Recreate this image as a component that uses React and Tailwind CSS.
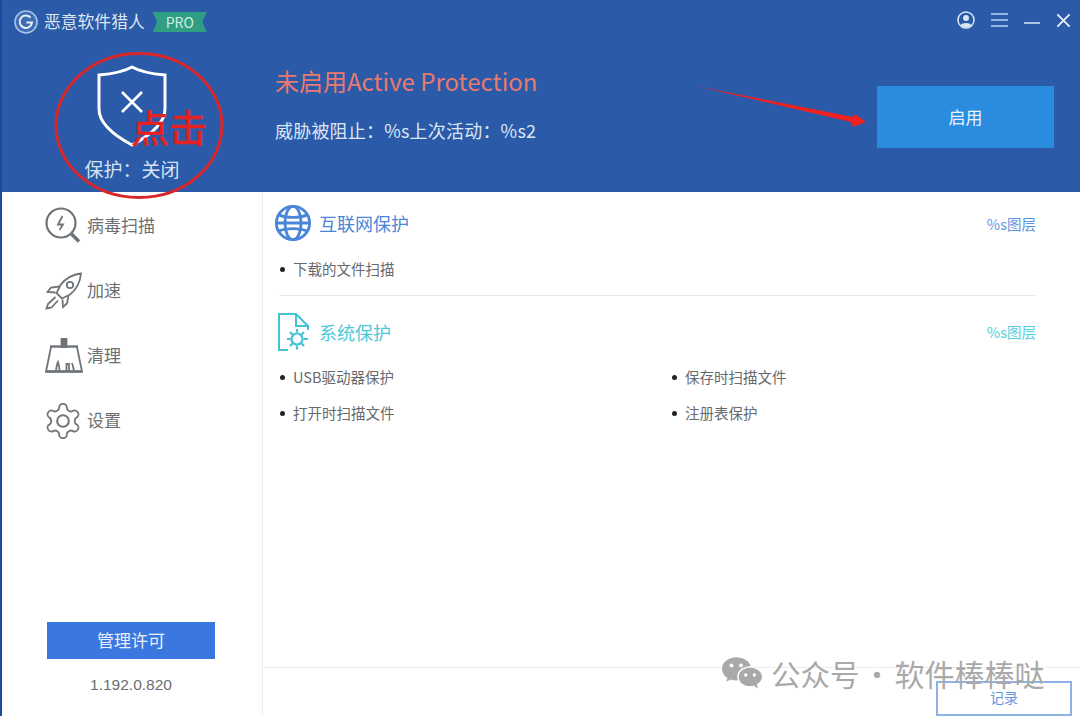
import React from "react";

const font = { fontFamily: '"Noto Sans CJK SC", "Liberation Sans", sans-serif' };

function Logo() {
  return (
    <svg width="24" height="24" viewBox="0 0 24 24" fill="none">
      <circle cx="12" cy="12" r="11" fill="#3f6db5" stroke="#a9c4e8" strokeWidth="1.6" />
      <path d="M16.5 7.6A6.2 6.2 0 1 0 18 12.6h-5.6" stroke="#e4edf8" strokeWidth="2" />
    </svg>
  );
}

function Shield() {
  return (
    <svg width="70" height="82" viewBox="0 0 70 82" fill="none" stroke="#ffffff">
      <path d="M35 2 C28 6 14 9 2 10 V44 C2 60 20 72 35 80 C50 72 68 60 68 44 V10 C56 9 42 6 35 2 Z" strokeWidth="3" />
      <path d="M25 27 L45 47 M45 27 L25 47" strokeWidth="2.6" />
    </svg>
  );
}

function ScanIcon() {
  return (
    <svg width="36" height="38" viewBox="0 0 36 38" fill="none" stroke="#6f7478" strokeWidth="2.2">
      <circle cx="16" cy="16" r="14.5" />
      <path d="M26.5 27 L34 34.5" strokeWidth="3.6" />
      <path d="M17.5 9 L13 17.5 H18 L14.5 23" strokeWidth="1.8" />
    </svg>
  );
}

function RocketIcon() {
  return (
    <svg width="38" height="38" viewBox="0 0 38 38" fill="none" stroke="#6f7478" strokeWidth="1.8">
      <path d="M36 1.5 C27 2.5 20 7 15.5 13 L11.5 21 L17 26.5 L25 22.5 C31 18 35 11 36 1.5 Z" />
      <circle cx="25" cy="13" r="3.2" />
      <path d="M14.5 14.5 L6 15.5 L2.5 20 L10.5 20.5 M23.5 23.5 L22 31.5 L18 35 L17.5 27.5" />
      <path d="M10.5 25 L3 32 L1.5 36.5 L6.5 35.5 L13 28.5" />
    </svg>
  );
}

function BroomIcon() {
  return (
    <svg width="38" height="36" viewBox="0 0 38 36" fill="none" stroke="#6f7478" strokeWidth="1.8">
      <path d="M16.5 1 H21.5 V9 H16.5 Z" fill="#6f7478" />
      <path d="M5 8.5 H33" strokeWidth="2.4" />
      <path d="M6 9 L1 33.5 H37 L32 9" />
      <path d="M0.5 33.5 H37.5" strokeWidth="2.4" />
      <path d="M11 33 C11.5 28 12 26 13 24 C14 27 14.5 30 14.5 33 M21.5 33 V26 H24 V33 M29 33 C28.5 30 28 28 27 25" />
    </svg>
  );
}

function GearIcon() {
  return (
    <svg width="36" height="36" viewBox="1.5 1.5 21 21" fill="none" stroke="#6f7478" strokeWidth="1.05" strokeLinejoin="round">
      <path d="M12.22 2h-.44a2 2 0 0 0-2 2v.18a2 2 0 0 1-1 1.73l-.43.25a2 2 0 0 1-2 0l-.15-.08a2 2 0 0 0-2.73.73l-.22.38a2 2 0 0 0 .73 2.73l.15.1a2 2 0 0 1 1 1.72v.51a2 2 0 0 1-1 1.74l-.15.09a2 2 0 0 0-.73 2.73l.22.38a2 2 0 0 0 2.73.73l.15-.08a2 2 0 0 1 2 0l.43.25a2 2 0 0 1 1 1.73V20a2 2 0 0 0 2 2h.44a2 2 0 0 0 2-2v-.18a2 2 0 0 1 1-1.73l.43-.25a2 2 0 0 1 2 0l.15.08a2 2 0 0 0 2.73-.73l.22-.39a2 2 0 0 0-.73-2.73l-.15-.08a2 2 0 0 1-1-1.74v-.5a2 2 0 0 1 1-1.74l.15-.09a2 2 0 0 0 .73-2.73l-.22-.38a2 2 0 0 0-2.73-.73l-.15.08a2 2 0 0 1-2 0l-.43-.25a2 2 0 0 1-1-1.73V4a2 2 0 0 0-2-2z" />
      <circle cx="12" cy="12" r="3.4" strokeWidth="1.2" />
    </svg>
  );
}

function GlobeIcon() {
  return (
    <svg width="38" height="38" viewBox="0 0 40 40" fill="none" stroke="#4a86d8" strokeWidth="3">
      <circle cx="20" cy="20" r="17.5" />
      <ellipse cx="20" cy="20" rx="8.5" ry="17.5" />
      <path d="M5 11.5 C13 15 27 15 35 11.5 M5 28.5 C13 25 27 25 35 28.5 M2.5 20 H37.5" />
    </svg>
  );
}

function SystemIcon() {
  return (
    <svg width="34" height="40" viewBox="0 0 34 40" fill="none" stroke="#43c3d6" strokeWidth="2">
      <path d="M11 38 H2 V2 H19 L31 14 V18 M19 2 V14 H31" />
      <circle cx="20" cy="27" r="5.5" strokeWidth="2.2" />
      <path d="M20 17 V20.5 M20 33.5 V37.5 M10 27 H13.5 M26.5 27 H31 M13 20 L15.5 22.5 M24.5 31.5 L27 34 M27 20 L24.5 22.5 M15.5 31.5 L13 34" strokeWidth="2.2" />
    </svg>
  );
}

function WeChat() {
  return (
    <svg width="40" height="33" viewBox="0 0 42 34" fill="#a9a9a9">
      <path d="M15 0 C6.7 0 0 5.4 0 12.2 C0 16 2.2 19.4 5.6 21.6 L4.4 25.6 L9 23.2 C10.9 23.9 12.9 24.3 15 24.3 C15.6 24.3 16.2 24.3 16.7 24.2 C16.2 22.9 16 21.6 16 20.2 C16 14 21.7 9.4 29 9.4 C29.4 9.4 29.7 9.4 30 9.4 C28.6 3.9 22.4 0 15 0 Z" />
      <path d="M29.5 11 C22.6 11 17.5 15.2 17.5 20.6 C17.5 26 22.6 30.2 29.5 30.2 C31 30.2 32.3 30 33.6 29.6 L37.5 33 L36.7 28.1 C39.8 26.3 42 23.6 42 20.6 C42 15.2 36.4 11 29.5 11 Z" />
      <circle cx="10" cy="8.5" r="2" fill="#ffffff" />
      <circle cx="20" cy="8.5" r="2" fill="#ffffff" />
      <circle cx="25" cy="18.5" r="1.8" fill="#ffffff" />
      <circle cx="34" cy="18.5" r="1.8" fill="#ffffff" />
    </svg>
  );
}

function NavItem({ icon, label }) {
  return (
    <div className="flex h-[65px] items-center">
      <div className="flex w-[42px] justify-start">{icon}</div>
      <span className="-mt-[2px] text-[17px] text-[#6b6f73]">{label}</span>
    </div>
  );
}

function Bullet({ children }) {
  return (
    <div className="flex h-[36px] items-center text-[14.5px] text-[#666a6e]">
      <span className="mr-[8px] h-[5px] w-[5px] rounded-full bg-[#222222]" />
      <span>{children}</span>
    </div>
  );
}

export default function App() {
  return (
    <div style={font} className="relative flex h-[716px] w-[1080px] flex-col overflow-hidden border-l-2 border-[#1d4a9c] bg-white">
      {/* Header */}
      <header className="flex h-[192px] shrink-0 flex-col bg-[#2b5aa8]">
        <div className="flex h-[44px] items-center pl-[12px] pr-[9px]">
          <Logo />
          <span className="ml-[6px] text-[16.8px] text-[#dbe6f5]">恶意软件猎人</span>
          <span className="ml-[8px] flex h-[20px] w-[54px] items-center justify-center bg-[#2f9e83] text-[14px] text-[#cfeee4] [clip-path:polygon(0_0,100%_0,92%_50%,100%_100%,0_100%,8%_50%)]">
            PRO
          </span>
          <div className="-mt-[4px] ml-auto flex items-center gap-[16px]">
            <svg width="18" height="18" viewBox="0 0 18 18" fill="none">
              <circle cx="9" cy="9" r="8" stroke="#dbe6f5" strokeWidth="1.5" />
              <circle cx="9" cy="7" r="3" fill="#dbe6f5" />
              <path d="M3.6 14.2 C5 11.4 13 11.4 14.4 14.2 C12 16.8 6 16.8 3.6 14.2 Z" fill="#dbe6f5" />
            </svg>
            <svg width="17" height="14" viewBox="0 0 17 14" stroke="#bcd0ea" strokeWidth="1.4">
              <path d="M0 1 H17 M0 7 H17 M0 13 H17" />
            </svg>
            <svg width="16" height="14" viewBox="0 0 16 14" stroke="#dbe6f5" strokeWidth="1.5">
              <path d="M0 10 H16" />
            </svg>
            <svg width="15" height="15" viewBox="0 0 16 16" stroke="#e8eff9" strokeWidth="2">
              <path d="M1.5 1.5 L14.5 14.5 M14.5 1.5 L1.5 14.5" />
            </svg>
          </div>
        </div>
        <div className="flex flex-1">
          <div className="flex w-[273px] flex-col items-center pr-[13px] pt-[21px]">
            <Shield />
            <span className="mt-[8px] text-[19px] leading-[28px] text-[#d6e2f3]">保护：关闭</span>
          </div>
          <div className="flex flex-col pt-[19px]">
            <h1 className="text-[24px] font-normal leading-[36px] text-[#e8796f]">未启用Active Protection</h1>
            <p className="mt-[18px] text-[18px] leading-[26px] tracking-[0.2px] text-[#dce7f6]">威胁被阻止：%s上次活动：%s2</p>
          </div>
          <button className="ml-auto mr-[26px] mt-[42px] h-[62px] w-[177px] bg-[#2a8cdf] text-[17px] text-[#e8f2fc]">启用</button>
        </div>
      </header>

      {/* Body */}
      <div className="flex min-h-0 flex-1">
        <aside className="flex w-[261px] shrink-0 flex-col border-r border-[#eeeeee] pl-[43px]">
          <nav className="flex flex-col pt-[1px]">
            <NavItem icon={<ScanIcon />} label="病毒扫描" />
            <NavItem icon={<RocketIcon />} label="加速" />
            <NavItem icon={<BroomIcon />} label="清理" />
            <NavItem icon={<GearIcon />} label="设置" />
          </nav>
          <button className="ml-[2px] mt-auto h-[37px] w-[168px] bg-[#3a78e0] pb-[2px] text-[17px] text-[#eaf1fc]">管理许可</button>
          <div className="mb-[21px] ml-[2px] mt-[16px] w-[168px] text-center text-[15.5px] leading-[20px] text-[#6b6f73]" style={{ fontFamily: '"Liberation Sans", sans-serif' }}>
            1.192.0.820
          </div>
        </aside>

        <main className="flex min-w-0 flex-1 flex-col">
          <div className="flex-1 pl-[11px] pr-[44px]">
            <section className="ml-[5px] h-[104px] border-b border-[#e9e9e9]">
              <div className="-ml-[5px] flex h-[62px] items-center">
                <GlobeIcon />
                <span className="ml-[7px] text-[18px] text-[#4a86d8]">互联网保护</span>
                <span className="ml-auto mt-[2px] text-[14.5px] text-[#5f95e0]">%s图层</span>
              </div>
              <div className="-mt-[3px] ml-[1px]">
                <Bullet>下载的文件扫描</Bullet>
              </div>
            </section>
            <section className="ml-[5px]">
              <div className="-ml-[2px] flex h-[63px] items-center pt-[9px]">
                <SystemIcon />
                <span className="ml-[8px] text-[18px] text-[#4cc8d8]">系统保护</span>
                <span className="ml-auto text-[14.5px] text-[#55cfdd]">%s图层</span>
              </div>
              <div className="ml-[1px] grid grid-cols-[392px_1fr]">
                <Bullet>USB驱动器保护</Bullet>
                <Bullet>保存时扫描文件</Bullet>
                <Bullet>打开时扫描文件</Bullet>
                <Bullet>注册表保护</Bullet>
              </div>
            </section>
          </div>
          <footer className="flex h-[49px] shrink-0 justify-end border-t border-[#eeeeee] pr-[8px] pt-[13px]">
            <button className="h-[35px] w-[136px] border-2 border-[#8fb2e6] pb-[2px] text-[14px] text-[#5f95e0]">记录</button>
          </footer>
        </main>
      </div>

      {/* Desktop peeking through along the window's left edge */}
      <span className="absolute left-[-2px] top-[103px] h-[40px] w-[2px] bg-[#4f9f6a]" />
      <span className="absolute left-[-2px] top-[222px] h-[55px] w-[2px] bg-[#c09a6b]" />
      <span className="absolute left-[-2px] top-[287px] h-[11px] w-[2px] bg-[#f2f4f8]" />

      {/* Annotations over the screenshot */}
      <svg className="absolute left-[-2px] top-0" width="1080" height="716" viewBox="0 0 1080 716" fill="none">
        <ellipse cx="139" cy="125.5" rx="83" ry="72" stroke="#d9262b" strokeWidth="3" />
        <path d="M696 86 L853 117 L855 114 L866 122 L853 127 L851 122 Z" fill="#f0211f" />
      </svg>
      <span className="absolute left-[129px] top-[99px] text-[38px] leading-[54px] text-[#e8201f] [-webkit-text-stroke:0.7px_#e8201f]">点击</span>

      {/* Watermark */}
      <div className="absolute left-[720px] top-[654px] flex items-center text-[#a9a9a9]">
        <WeChat />
        <span className="ml-[9px] whitespace-nowrap text-[29.5px] leading-[38px]">公众号</span>
        <span className="w-[35px] text-center text-[29.5px] leading-[38px]">·</span>
        <span className="whitespace-nowrap text-[30px] leading-[38px]">软件棒棒哒</span>
      </div>
    </div>
  );
}
